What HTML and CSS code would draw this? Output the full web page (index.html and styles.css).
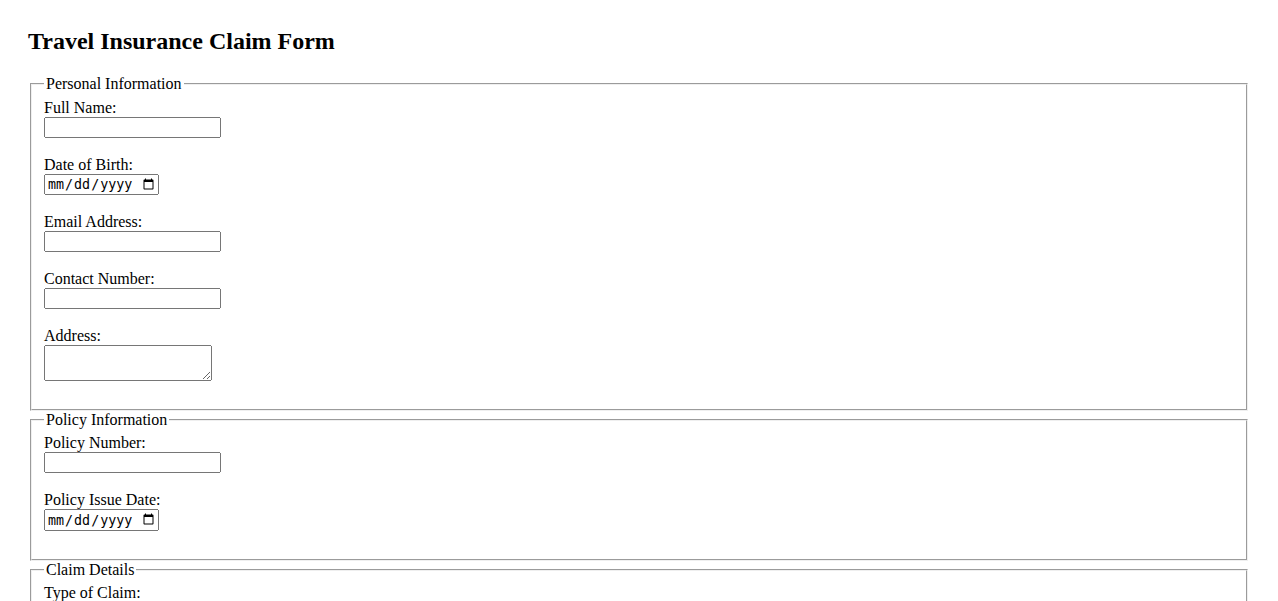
FILE: index.html
```html
<!DOCTYPE html>
<html lang="en">
<head>
  <meta charset="UTF-8" />
  <meta name="viewport" content="width=device-width, initial-scale=1.0"/>
  <title>Travel Insurance Claim Form</title>
  <link rel="stylesheet" href="styles.css">
</head>
<body>

  <h2>Travel Insurance Claim Form</h2>

  <form id="claimForm">
    <fieldset>
      <legend>Personal Information</legend>
      <label for="fullName">Full Name:</label><br>
      <input type="text" id="fullName" name="fullName"><br><br>

      <label for="dob">Date of Birth:</label><br>
      <input type="date" id="dob" name="dob"><br><br>

      <label for="email">Email Address:</label><br>
      <input type="email" id="email" name="email"><br><br>

      <label for="phone">Contact Number:</label><br>
      <input type="tel" id="phone" name="phone"><br><br>

      <label for="address">Address:</label><br>
      <textarea id="address" name="address"></textarea><br><br>
    </fieldset>

    <fieldset>
      <legend>Policy Information</legend>
      <label for="policyNumber">Policy Number:</label><br>
      <input type="text" id="policyNumber" name="policyNumber"><br><br>

      <label for="issueDate">Policy Issue Date:</label><br>
      <input type="date" id="issueDate" name="issueDate"><br><br>
    </fieldset>

    <fieldset>
      <legend>Claim Details</legend>
      <label for="claimType">Type of Claim:</label><br>
      <select id="claimType" name="claimType">
        <option value="medical">Medical Expenses</option>
        <option value="baggage">Lost Baggage</option>
        <option value="cancellation">Trip Cancellation</option>
        <option value="delay">Travel Delay</option>
      </select><br><br>

      <label for="incidentDate">Date of Incident:</label><br>
      <input type="date" id="incidentDate" name="incidentDate"><br><br>

      <label for="description">Description of Incident:</label><br>
      <textarea id="description" name="description"></textarea><br><br>
    </fieldset>

    <br>
    <input type="submit" value="Submit Claim">
  </form>

</body>
</html>
```

FILE: styles.css
```css
body {
  margin: 8px;
  padding: 20px;
  font-family: "Liberation Serif", "Times New Roman", serif;
}

h2 {
  margin-top: 0;
}

input[type="text"], input[type="email"], input[type="tel"] {
  box-sizing: border-box;
  width: 177px;
}

input[type="date"] {
  box-sizing: border-box;
  width: 115px;
}

textarea {
  box-sizing: border-box;
  width: 168px;
  vertical-align: bottom;
}
```
